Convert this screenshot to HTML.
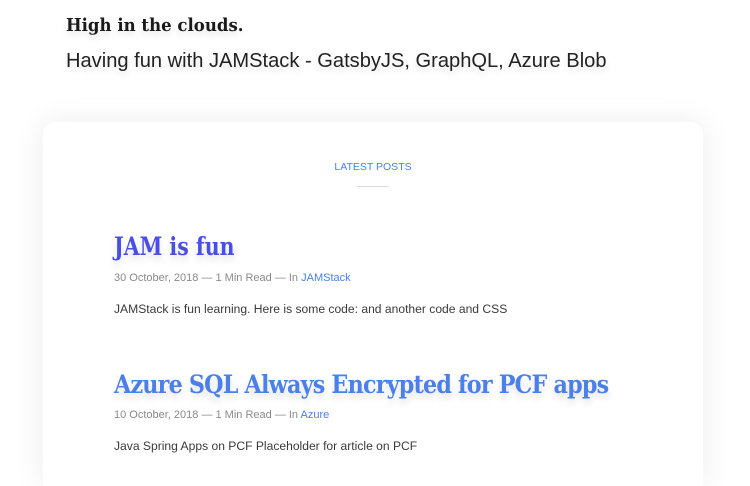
<!DOCTYPE html>
<html><head><style>
html,body{margin:0;width:750px;height:486px;overflow:hidden}
body{background:#fff;font-family:"Liberation Sans",sans-serif;position:relative}
.t{position:absolute;white-space:nowrap}
.card{position:absolute;left:43px;top:122px;width:660px;height:364px;background:#fff;border-radius:12px 12px 0 0;box-shadow:0 0 30px rgba(0,0,0,0.08)}
.ser{font-family:"DejaVu Serif","Liberation Serif",serif;font-weight:bold;transform-origin:0 0}
.meta{font-size:11px;color:#8a8a8a}
.meta a{color:#4a80e8;text-decoration:none}
.ex{font-size:12.1px;color:#3a3a3a}
</style></head><body>
<div class="t ser" style="left:66px;top:15px;font-size:18px;color:#1a1a1a;transform:scaleX(0.92);text-shadow:0 4px 8px rgba(0,0,0,0.12)">High in the clouds.</div>
<div class="t" style="left:66px;top:50px;font-size:20.1px;color:#222;text-shadow:0 4px 8px rgba(0,0,0,0.12)">Having fun with JAMStack - GatsbyJS, GraphQL, Azure Blob</div>
<div class="card"></div>
<div class="t" style="left:0;width:746px;text-align:center;top:161px;font-size:10.5px;color:#4a7ee8">LATEST POSTS</div>
<div class="t" style="left:357px;top:186px;width:32px;height:1px;background:#ddd"></div>
<div class="t ser" style="left:114px;top:232px;font-size:25px;color:#4a4ee8;transform:scaleX(0.82);text-shadow:0 5px 8px rgba(0,0,0,0.12)">JAM is fun</div>
<div class="t meta" style="left:114px;top:272px">30 October, 2018 — 1 Min Read — In <a>JAMStack</a></div>
<div class="t ex" style="left:114px;top:302px">JAMStack is fun learning. Here is some code: and another code and CSS</div>
<div class="t ser" style="left:114px;top:370px;font-size:25px;letter-spacing:-0.9px;color:#4a80e8;transform:scaleX(0.89);text-shadow:0 5px 8px rgba(0,0,0,0.12)">Azure SQL Always Encrypted for PCF apps</div>
<div class="t meta" style="left:114px;top:409px">10 October, 2018 — 1 Min Read — In <a>Azure</a></div>
<div class="t ex" style="left:114px;top:439px">Java Spring Apps on PCF Placeholder for article on PCF</div>
</body></html>
